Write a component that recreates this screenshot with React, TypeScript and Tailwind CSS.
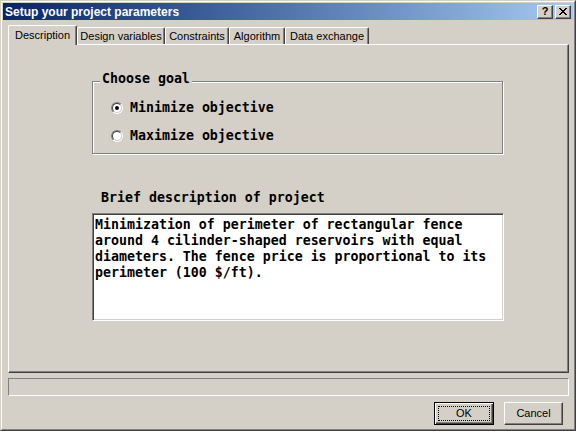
import React from "react";

const ui = { fontFamily: '"Liberation Sans", Arial, sans-serif' };
const mono = { fontFamily: '"DejaVu Sans Mono", "Liberation Mono", monospace' };

const tabs = [
  { label: "Description", w: "w-[69px]", active: true },
  { label: "Design variables", w: "w-[88px]", active: false },
  { label: "Constraints", w: "w-[64px]", active: false },
  { label: "Algorithm", w: "w-[56px]", active: false },
  { label: "Data exchange", w: "w-[84px]", active: false },
];

const Radio = ({ checked, label }: { checked: boolean; label: string }) => (
  <div className="flex items-center h-[16px] gap-[7px] pl-[18px]">
    <div className="w-[12px] h-[12px] rounded-full border border-t-[#808080] border-l-[#808080] border-r-white border-b-white">
      <div className="w-full h-full rounded-full border border-t-[#404040] border-l-[#404040] border-r-[#d4d0c8] border-b-[#d4d0c8] bg-white flex items-center justify-center">
        {checked && <div className="w-[4px] h-[4px] rounded-full bg-black" />}
      </div>
    </div>
    <span className="text-[13.28px] font-bold leading-[16px] text-black whitespace-pre">{label}</span>
  </div>
);

const CaptionButton = ({ children }: { children: React.ReactNode }) => (
  <div className="w-[16px] h-[14px] bg-[#d4d0c8] border border-t-white border-l-white border-r-[#404040] border-b-[#404040] shadow-[inset_-1px_-1px_0_#808080] flex items-center justify-center">
    {children}
  </div>
);

export default function App() {
  return (
    <div className="w-[576px] h-[431px] bg-[#d4d0c8] border border-t-[#d4d0c8] border-l-[#d4d0c8] border-r-[#404040] border-b-[#404040]" style={ui}>
      <div className="h-full border border-t-white border-l-white border-r-[#808080] border-b-[#808080] p-px flex flex-col">
        {/* title bar */}
        <div className="h-[17px] flex items-center justify-between bg-gradient-to-r from-[#0a246a] to-[#a6caf0] pl-[2px] pr-[2px]">
          <span className="text-white font-bold text-[12px] leading-none">Setup your project parameters</span>
          <div className="flex gap-[2px]">
            <CaptionButton>
              <span className="text-black font-bold text-[11px] leading-none">?</span>
            </CaptionButton>
            <CaptionButton>
              <svg width="8" height="7" viewBox="0 0 8 7" shapeRendering="crispEdges">
                <path d="M0 0h2v1h-2zM6 0h2v1h-2zM1 1h2v1h-2zM5 1h2v1h-2zM2 2h4v1h-4zM3 3h2v1h-2zM2 4h4v1h-4zM1 5h2v1h-2zM5 5h2v1h-2zM0 6h2v1h-2zM6 6h2v1h-2z" fill="#000" />
              </svg>
            </CaptionButton>
          </div>
        </div>

        {/* tabs */}
        <div className="mt-[5px] h-[19px] pl-[5px] flex items-end">
          {tabs.map((t) =>
            t.active ? (
              <div
                key={t.label}
                className={`${t.w} h-[20px] -mb-px relative z-10 bg-[#d4d0c8] border-l border-t border-white border-r border-r-[#404040] shadow-[inset_-1px_0_0_#808080] rounded-t-[2px] flex items-center justify-center text-[11px] text-black`}
              >
                {t.label}
              </div>
            ) : (
              <div
                key={t.label}
                className={`${t.w} h-[17px] bg-[#d4d0c8] border-l border-t border-white border-r border-r-[#404040] shadow-[inset_-1px_0_0_#808080] rounded-t-[2px] flex items-center justify-center pt-px text-[11px] text-black`}
              >
                {t.label}
              </div>
            )
          )}
        </div>

        {/* panel */}
        <div className="ml-[5px] w-[561px] h-[329px] border-l border-t border-white border-r border-b border-r-[#404040] border-b-[#404040] shadow-[inset_-1px_-1px_0_#808080] flex flex-col" style={mono}>
          <div className="mt-[36px] ml-[83px] w-[411px] h-[73px] relative border border-[#808080] shadow-[inset_1px_1px_0_#fff,1px_1px_0_#fff]">
            <span className="absolute left-[7px] top-[-11px] px-[2px] bg-[#d4d0c8] text-[13.28px] font-bold leading-[16px] text-black">
              Choose goal
            </span>
            <div className="pt-[18px] flex flex-col gap-[12px]">
              <Radio checked label="Minimize objective" />
              <Radio checked={false} label="Maximize objective" />
            </div>
          </div>

          <div className="mt-[36px] ml-[92px] text-[13.28px] font-bold leading-[16px] text-black">
            Brief description of project
          </div>

          <div className="mt-[7px] ml-[83px] w-[412px] h-[108px] bg-white border border-t-[#808080] border-l-[#808080] border-r-white border-b-white shadow-[inset_1px_1px_0_#404040,inset_-1px_-1px_0_#d4d0c8] pt-[3px] pl-[2px] text-[13.28px] font-bold leading-[16px] text-black whitespace-pre">
            <div>Minimization of perimeter of rectangular fence</div>
            <div>around 4 cilinder-shaped reservoirs with equal</div>
            <div>diameters. The fence price is proportional to its</div>
            <div>perimeter (100 $/ft).</div>
          </div>
        </div>

        {/* status bar */}
        <div className="mt-[5px] ml-[5px] mr-[4px] h-[18px] border border-t-[#808080] border-l-[#808080] border-r-white border-b-white" />

        {/* buttons */}
        <div className="mt-[6px] flex justify-end gap-[10px] pr-[10px]">
          <button className="w-[60px] h-[23px] border border-black bg-[#d4d0c8] shadow-[inset_1px_1px_0_#fff,inset_-1px_-1px_0_#404040,inset_-2px_-2px_0_#808080] p-[3px]">
            <div className="w-full h-full border border-dotted border-black flex items-center justify-center text-[11px] text-black">
              OK
            </div>
          </button>
          <button className="w-[59px] h-[23px] bg-[#d4d0c8] border border-t-white border-l-white border-r-[#404040] border-b-[#404040] shadow-[inset_-1px_-1px_0_#808080] flex items-center justify-center text-[11px] text-black">
            Cancel
          </button>
        </div>
      </div>
    </div>
  );
}
